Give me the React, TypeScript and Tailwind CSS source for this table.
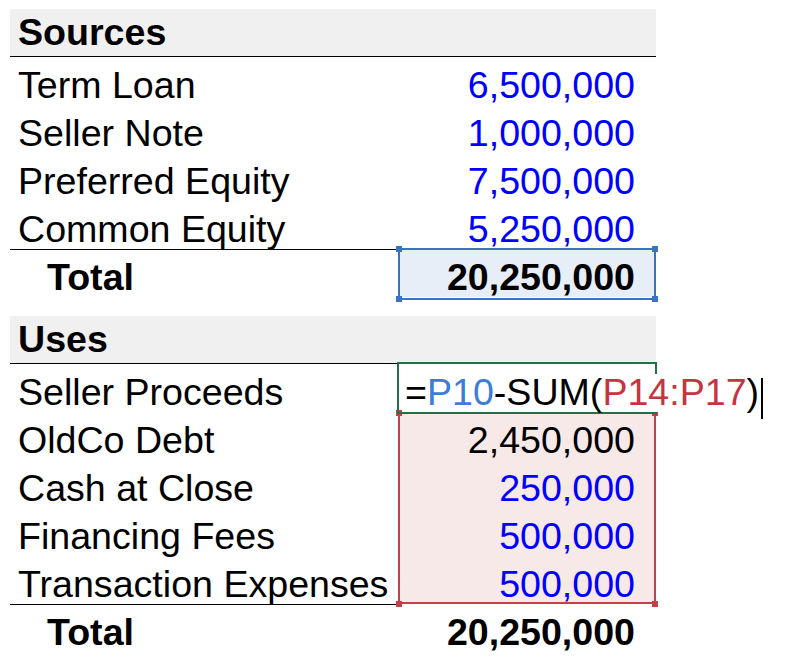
import React from 'react';

type Row = { label: string; value: string; input?: boolean };

const sources: Row[] = [
  { label: 'Term Loan', value: '6,500,000', input: true },
  { label: 'Seller Note', value: '1,000,000', input: true },
  { label: 'Preferred Equity', value: '7,500,000', input: true },
  { label: 'Common Equity', value: '5,250,000', input: true },
];

const uses: Row[] = [
  { label: 'OldCo Debt', value: '2,450,000' },
  { label: 'Cash at Close', value: '250,000', input: true },
  { label: 'Financing Fees', value: '500,000', input: true },
  { label: 'Transaction Expenses', value: '500,000', input: true },
];

function Handle({ pos, color }: { pos: string; color: string }) {
  return <span className={`absolute w-[6px] h-[6px] ${pos} ${color}`} />;
}

function Header({ title }: { title: string }) {
  return (
    <div className="col-span-2 h-[48px] bg-[#f0f0f0] border-b-[1.5px] border-black flex items-end pl-[8px] pb-[4px] font-bold leading-none">
      {title}
    </div>
  );
}

function Label({ text }: { text: string }) {
  return <div className="h-[48px] flex items-end pl-[8px] pb-[0px] leading-none whitespace-nowrap">{text}</div>;
}

function Value({ row }: { row: Row }) {
  return (
    <div className={`h-[48px] flex items-end justify-end pr-[21px] pb-[0px] leading-none ${row.input ? 'text-[#0000ff]' : 'text-black'}`}>
      {row.value}
    </div>
  );
}

export default function App() {
  return (
    <div className="w-[804px] h-[663px] bg-white pt-[9px] pl-[10px] text-[37.6px] text-black font-['Liberation_Sans',Arial,sans-serif]">
      {/* Sources */}
      <div className="grid grid-cols-[388px_258px]">
        <Header title="Sources" />
        {sources.map((r) => (
          <React.Fragment key={r.label}>
            <Label text={r.label} />
            <Value row={r} />
          </React.Fragment>
        ))}
        <div className="h-[48px] border-t-[1.5px] border-black flex items-end pl-[37px] pb-[0px] font-bold leading-none">Total</div>
        <div className="relative h-[48px] bg-[#e8eef8] flex items-end justify-end pr-[21px] pb-[0px] font-bold leading-none">
          <div className="absolute -top-[1px] -bottom-[3px] left-0 right-0 border-2 border-[#3a72c6]" />
          <Handle pos="-top-[3px] -left-[2px]" color="bg-[#3a72c6]" />
          <Handle pos="-top-[3px] -right-[2px]" color="bg-[#3a72c6]" />
          <Handle pos="-bottom-[5px] -left-[2px]" color="bg-[#3a72c6]" />
          <Handle pos="-bottom-[5px] -right-[2px]" color="bg-[#3a72c6]" />
          <span className="relative">20,250,000</span>
        </div>
      </div>

      <div className="h-[19px]" />

      {/* Uses */}
      <div className="grid grid-cols-[388px_258px]">
        <Header title="Uses" />
        <Label text="Seller Proceeds" />
        <div className="relative z-10 h-[48px] flex items-end pl-[7px] pb-[0px] leading-none whitespace-nowrap">
          <div className="absolute -top-[2px] -bottom-[2px] -left-[1px] -right-[1px] border-[2.5px] border-[#217346]" />
          <span className="relative shrink-0 bg-white">
            =<span className="text-[#3b7dd8]">P10</span>-SUM(<span className="text-[#c7343f]">P14:P17</span>)
          </span>
          <span className="relative shrink-0 block w-[2px] h-[41px] bg-black ml-[2px] mb-[-7px]" />
        </div>
        <div className="flex flex-col">
          {uses.map((r) => (
            <Label key={r.label} text={r.label} />
          ))}
        </div>
        <div className="relative bg-[#f8e9e9]">
          <div className="absolute inset-0 border-2 border-[#c1414a]" />
          <Handle pos="-top-[2px] -left-[2px]" color="bg-[#c1414a]" />
          <Handle pos="-top-[2px] -right-[2px]" color="bg-[#c1414a]" />
          <Handle pos="-bottom-[3px] -left-[2px]" color="bg-[#c1414a]" />
          <Handle pos="-bottom-[3px] -right-[2px]" color="bg-[#c1414a]" />
          <div className="relative">
            {uses.map((r) => (
              <Value key={r.label} row={r} />
            ))}
          </div>
        </div>
        <div className="h-[48px] border-t-[1.5px] border-black flex items-end pl-[37px] pb-[0px] font-bold leading-none">Total</div>
        <div className="h-[48px] flex items-end justify-end pr-[21px] pb-[0px] font-bold leading-none">20,250,000</div>
      </div>
    </div>
  );
}
